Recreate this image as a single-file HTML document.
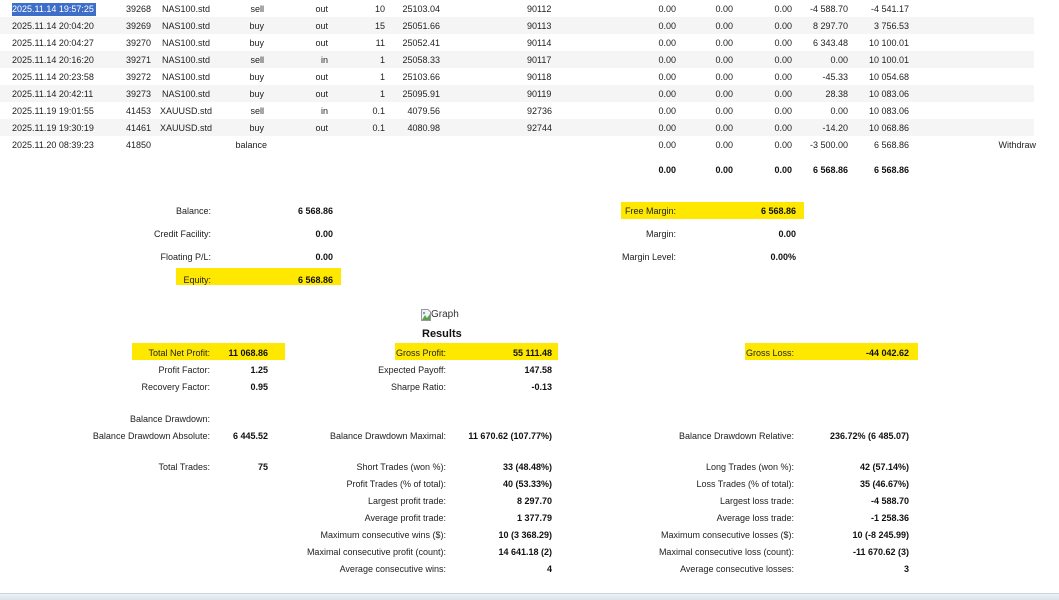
<!DOCTYPE html>
<html><head><meta charset="utf-8"><style>
html,body{margin:0;padding:0;background:#fff;width:1059px;height:600px;overflow:hidden;position:relative;font-family:Tahoma,"Liberation Sans",sans-serif;font-size:9px;color:#222}
.s{position:absolute;line-height:12px;white-space:nowrap}
.r{position:absolute;line-height:12px;white-space:nowrap;width:300px;text-align:right}
.b{font-weight:bold;color:#111}
.stripe{position:absolute;left:0;width:1034px;height:17px;background:#f5f5f5}
.hl{position:absolute;background:#ffe800;height:17px}
</style></head><body>
<div class="stripe" style="top:17px"></div>
<div class="stripe" style="top:51px"></div>
<div class="stripe" style="top:85px"></div>
<div class="stripe" style="top:119px"></div>
<div style="position:absolute;left:12px;top:3px;width:84px;height:13px;background:#3d6fc9"></div>

<!-- rows -->
<div class="s" style="left:12px;top:3px;color:#fff">2025.11.14 19:57:25</div>
<div class="r" style="left:-149px;top:3px">39268</div><div class="s" style="left:162px;top:3px">NAS100.std</div><div class="r" style="left:-36px;top:3px">sell</div><div class="r" style="left:28px;top:3px">out</div><div class="r" style="left:85px;top:3px">10</div><div class="r" style="left:140px;top:3px">25103.04</div><div class="s" style="left:527px;top:3px">90112</div><div class="r" style="left:376px;top:3px">0.00</div><div class="r" style="left:433px;top:3px">0.00</div><div class="r" style="left:492px;top:3px">0.00</div><div class="r" style="left:548px;top:3px">-4 588.70</div><div class="r" style="left:609px;top:3px">-4 541.17</div>

<div class="s" style="left:12px;top:20px">2025.11.14 20:04:20</div>
<div class="r" style="left:-149px;top:20px">39269</div><div class="s" style="left:162px;top:20px">NAS100.std</div><div class="r" style="left:-36px;top:20px">buy</div><div class="r" style="left:28px;top:20px">out</div><div class="r" style="left:85px;top:20px">15</div><div class="r" style="left:140px;top:20px">25051.66</div><div class="s" style="left:527px;top:20px">90113</div><div class="r" style="left:376px;top:20px">0.00</div><div class="r" style="left:433px;top:20px">0.00</div><div class="r" style="left:492px;top:20px">0.00</div><div class="r" style="left:548px;top:20px">8 297.70</div><div class="r" style="left:609px;top:20px">3 756.53</div>

<div class="s" style="left:12px;top:37px">2025.11.14 20:04:27</div>
<div class="r" style="left:-149px;top:37px">39270</div><div class="s" style="left:162px;top:37px">NAS100.std</div><div class="r" style="left:-36px;top:37px">buy</div><div class="r" style="left:28px;top:37px">out</div><div class="r" style="left:85px;top:37px">11</div><div class="r" style="left:140px;top:37px">25052.41</div><div class="s" style="left:527px;top:37px">90114</div><div class="r" style="left:376px;top:37px">0.00</div><div class="r" style="left:433px;top:37px">0.00</div><div class="r" style="left:492px;top:37px">0.00</div><div class="r" style="left:548px;top:37px">6 343.48</div><div class="r" style="left:609px;top:37px">10 100.01</div>

<div class="s" style="left:12px;top:54px">2025.11.14 20:16:20</div>
<div class="r" style="left:-149px;top:54px">39271</div><div class="s" style="left:162px;top:54px">NAS100.std</div><div class="r" style="left:-36px;top:54px">sell</div><div class="r" style="left:28px;top:54px">in</div><div class="r" style="left:85px;top:54px">1</div><div class="r" style="left:140px;top:54px">25058.33</div><div class="s" style="left:527px;top:54px">90117</div><div class="r" style="left:376px;top:54px">0.00</div><div class="r" style="left:433px;top:54px">0.00</div><div class="r" style="left:492px;top:54px">0.00</div><div class="r" style="left:548px;top:54px">0.00</div><div class="r" style="left:609px;top:54px">10 100.01</div>

<div class="s" style="left:12px;top:71px">2025.11.14 20:23:58</div>
<div class="r" style="left:-149px;top:71px">39272</div><div class="s" style="left:162px;top:71px">NAS100.std</div><div class="r" style="left:-36px;top:71px">buy</div><div class="r" style="left:28px;top:71px">out</div><div class="r" style="left:85px;top:71px">1</div><div class="r" style="left:140px;top:71px">25103.66</div><div class="s" style="left:527px;top:71px">90118</div><div class="r" style="left:376px;top:71px">0.00</div><div class="r" style="left:433px;top:71px">0.00</div><div class="r" style="left:492px;top:71px">0.00</div><div class="r" style="left:548px;top:71px">-45.33</div><div class="r" style="left:609px;top:71px">10 054.68</div>

<div class="s" style="left:12px;top:88px">2025.11.14 20:42:11</div>
<div class="r" style="left:-149px;top:88px">39273</div><div class="s" style="left:162px;top:88px">NAS100.std</div><div class="r" style="left:-36px;top:88px">buy</div><div class="r" style="left:28px;top:88px">out</div><div class="r" style="left:85px;top:88px">1</div><div class="r" style="left:140px;top:88px">25095.91</div><div class="s" style="left:527px;top:88px">90119</div><div class="r" style="left:376px;top:88px">0.00</div><div class="r" style="left:433px;top:88px">0.00</div><div class="r" style="left:492px;top:88px">0.00</div><div class="r" style="left:548px;top:88px">28.38</div><div class="r" style="left:609px;top:88px">10 083.06</div>

<div class="s" style="left:12px;top:105px">2025.11.19 19:01:55</div>
<div class="r" style="left:-149px;top:105px">41453</div><div class="s" style="left:160px;top:105px">XAUUSD.std</div><div class="r" style="left:-36px;top:105px">sell</div><div class="r" style="left:28px;top:105px">in</div><div class="r" style="left:85px;top:105px">0.1</div><div class="r" style="left:140px;top:105px">4079.56</div><div class="s" style="left:527px;top:105px">92736</div><div class="r" style="left:376px;top:105px">0.00</div><div class="r" style="left:433px;top:105px">0.00</div><div class="r" style="left:492px;top:105px">0.00</div><div class="r" style="left:548px;top:105px">0.00</div><div class="r" style="left:609px;top:105px">10 083.06</div>

<div class="s" style="left:12px;top:122px">2025.11.19 19:30:19</div>
<div class="r" style="left:-149px;top:122px">41461</div><div class="s" style="left:160px;top:122px">XAUUSD.std</div><div class="r" style="left:-36px;top:122px">buy</div><div class="r" style="left:28px;top:122px">out</div><div class="r" style="left:85px;top:122px">0.1</div><div class="r" style="left:140px;top:122px">4080.98</div><div class="s" style="left:527px;top:122px">92744</div><div class="r" style="left:376px;top:122px">0.00</div><div class="r" style="left:433px;top:122px">0.00</div><div class="r" style="left:492px;top:122px">0.00</div><div class="r" style="left:548px;top:122px">-14.20</div><div class="r" style="left:609px;top:122px">10 068.86</div>

<div class="s" style="left:12px;top:139px">2025.11.20 08:39:23</div>
<div class="r" style="left:-149px;top:139px">41850</div><div class="r" style="left:-33px;top:139px">balance</div><div class="r" style="left:376px;top:139px">0.00</div><div class="r" style="left:433px;top:139px">0.00</div><div class="r" style="left:492px;top:139px">0.00</div><div class="r" style="left:548px;top:139px">-3 500.00</div><div class="r" style="left:609px;top:139px">6 568.86</div><div class="r" style="left:736px;top:139px">Withdraw</div>

<div class="r b" style="left:376px;top:164px">0.00</div><div class="r b" style="left:433px;top:164px">0.00</div><div class="r b" style="left:492px;top:164px">0.00</div><div class="r b" style="left:548px;top:164px">6 568.86</div><div class="r b" style="left:609px;top:164px">6 568.86</div>

<!-- summary -->
<div class="hl" style="left:621px;top:202px;width:183px"></div>
<div class="hl" style="left:176px;top:268px;width:165px"></div>
<div class="r" style="left:-89px;top:205px">Balance:</div><div class="r b" style="left:33px;top:205px">6 568.86</div>
<div class="r" style="left:-89px;top:228px">Credit Facility:</div><div class="r b" style="left:33px;top:228px">0.00</div>
<div class="r" style="left:-89px;top:251px">Floating P/L:</div><div class="r b" style="left:33px;top:251px">0.00</div>
<div class="r" style="left:-89px;top:274px">Equity:</div><div class="r b" style="left:33px;top:274px">6 568.86</div>
<div class="r" style="left:376px;top:205px">Free Margin:</div><div class="r b" style="left:496px;top:205px">6 568.86</div>
<div class="r" style="left:376px;top:228px">Margin:</div><div class="r b" style="left:496px;top:228px">0.00</div>
<div class="r" style="left:376px;top:251px">Margin Level:</div><div class="r b" style="left:496px;top:251px">0.00%</div>

<!-- graph -->
<svg style="position:absolute;left:421px;top:309px" width="10" height="12" viewBox="0 0 10 12"><path d="M0.5 0.5H7L9.5 3V11.5H0.5Z" fill="#f4f4f4" stroke="#999"/><path d="M1 11L4 6L6 9L9 5V11Z" fill="#5aa050"/><circle cx="3" cy="4" r="1.2" fill="#6aa0d8"/></svg>
<div class="s" style="left:431px;top:309px;font-size:10px;color:#333">Graph</div>
<div class="s b" style="left:422px;top:328px;font-size:11px">Results</div>

<div class="hl" style="left:132px;top:343px;width:153px"></div>
<div class="hl" style="left:395px;top:343px;width:163px"></div>
<div class="hl" style="left:745px;top:343px;width:173px"></div>

<div class="r" style="left:-90px;top:347px">Total Net Profit:</div><div class="r b" style="left:-32px;top:347px">11 068.86</div>
<div class="r" style="left:-90px;top:364px">Profit Factor:</div><div class="r b" style="left:-32px;top:364px">1.25</div>
<div class="r" style="left:-90px;top:381px">Recovery Factor:</div><div class="r b" style="left:-32px;top:381px">0.95</div>
<div class="r" style="left:-90px;top:413px">Balance Drawdown:</div>
<div class="r" style="left:-90px;top:430px">Balance Drawdown Absolute:</div><div class="r b" style="left:-32px;top:430px">6 445.52</div>
<div class="r" style="left:-90px;top:461px">Total Trades:</div><div class="r b" style="left:-32px;top:461px">75</div>

<div class="r" style="left:146px;top:347px">Gross Profit:</div><div class="r b" style="left:252px;top:347px">55 111.48</div>
<div class="r" style="left:146px;top:364px">Expected Payoff:</div><div class="r b" style="left:252px;top:364px">147.58</div>
<div class="r" style="left:146px;top:381px">Sharpe Ratio:</div><div class="r b" style="left:252px;top:381px">-0.13</div>
<div class="r" style="left:146px;top:430px">Balance Drawdown Maximal:</div><div class="r b" style="left:252px;top:430px">11 670.62 (107.77%)</div>
<div class="r" style="left:146px;top:461px">Short Trades (won %):</div><div class="r b" style="left:252px;top:461px">33 (48.48%)</div>
<div class="r" style="left:146px;top:478px">Profit Trades (% of total):</div><div class="r b" style="left:252px;top:478px">40 (53.33%)</div>
<div class="r" style="left:146px;top:495px">Largest profit trade:</div><div class="r b" style="left:252px;top:495px">8 297.70</div>
<div class="r" style="left:146px;top:512px">Average profit trade:</div><div class="r b" style="left:252px;top:512px">1 377.79</div>
<div class="r" style="left:146px;top:529px">Maximum consecutive wins ($):</div><div class="r b" style="left:252px;top:529px">10 (3 368.29)</div>
<div class="r" style="left:146px;top:546px">Maximal consecutive profit (count):</div><div class="r b" style="left:252px;top:546px">14 641.18 (2)</div>
<div class="r" style="left:146px;top:563px">Average consecutive wins:</div><div class="r b" style="left:252px;top:563px">4</div>

<div class="r" style="left:494px;top:347px">Gross Loss:</div><div class="r b" style="left:609px;top:347px">-44 042.62</div>
<div class="r" style="left:494px;top:430px">Balance Drawdown Relative:</div><div class="r b" style="left:609px;top:430px">236.72% (6 485.07)</div>
<div class="r" style="left:494px;top:461px">Long Trades (won %):</div><div class="r b" style="left:609px;top:461px">42 (57.14%)</div>
<div class="r" style="left:494px;top:478px">Loss Trades (% of total):</div><div class="r b" style="left:609px;top:478px">35 (46.67%)</div>
<div class="r" style="left:494px;top:495px">Largest loss trade:</div><div class="r b" style="left:609px;top:495px">-4 588.70</div>
<div class="r" style="left:494px;top:512px">Average loss trade:</div><div class="r b" style="left:609px;top:512px">-1 258.36</div>
<div class="r" style="left:494px;top:529px">Maximum consecutive losses ($):</div><div class="r b" style="left:609px;top:529px">10 (-8 245.99)</div>
<div class="r" style="left:494px;top:546px">Maximal consecutive loss (count):</div><div class="r b" style="left:609px;top:546px">-11 670.62 (3)</div>
<div class="r" style="left:494px;top:563px">Average consecutive losses:</div><div class="r b" style="left:609px;top:563px">3</div>

<div style="position:absolute;left:0;top:593px;width:1059px;height:7px;background:linear-gradient(#eef2f6,#d6e0ea);border-top:1px solid #c8d2dc"></div>
</body></html>
